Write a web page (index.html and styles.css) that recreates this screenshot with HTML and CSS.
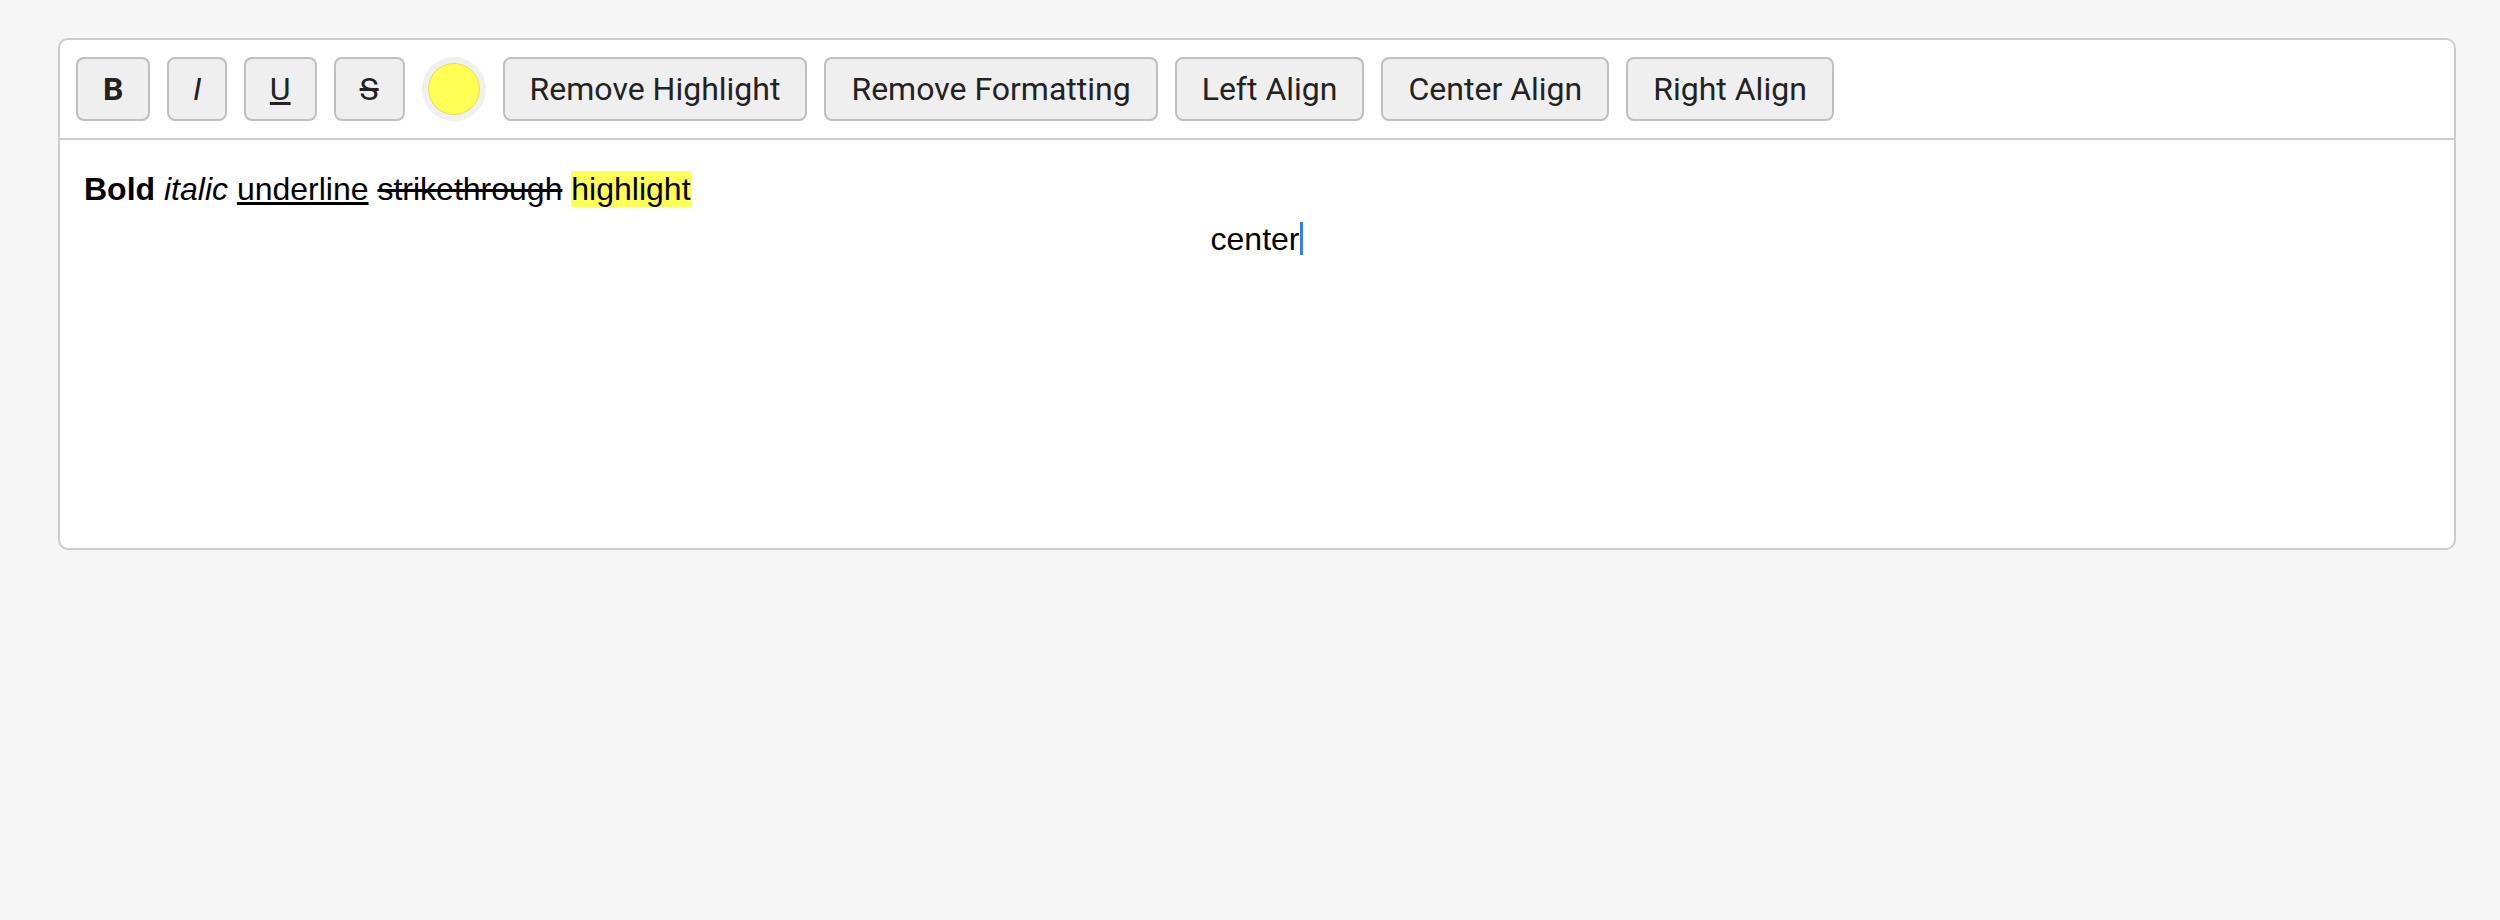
FILE: index.html
```html
<!DOCTYPE html>
<html lang="en">
<head>
<meta charset="utf-8">
<title>Editor</title>
<link rel="stylesheet" href="styles.css">
</head>
<body>
<div class="editor-box">
  <div class="toolbar">
    <button class="btn btn-b">B</button>
    <button class="btn btn-i">I</button>
    <button class="btn btn-u">U</button>
    <button class="btn btn-s">S</button>
    <span class="color-pick"><span class="swatch"></span></span>
    <button class="btn">Remove Highlight</button>
    <button class="btn">Remove Formatting</button>
    <button class="btn">Left Align</button>
    <button class="btn">Center Align</button>
    <button class="btn">Right Align</button>
  </div>
  <div class="editor">
    <div class="line"><b>Bold</b> <i>italic</i> <u>underline</u> <s>strikethrough</s> <span class="hl">highlight</span></div>
    <div class="line center">center<span class="caret"></span></div>
  </div>
</div>
</body>
</html>
```
FILE: styles.css
```css
html, body {
  margin: 0;
  background: #f6f6f6;
}
body {
  padding: 38px 44px 0 58px;
}
.editor-box {
  background: #fff;
  border: 2px solid #cccccc;
  border-radius: 10px;
}
.toolbar {
  display: flex;
  align-items: center;
  gap: 17px;
  padding: 17px 16px;
  border-bottom: 2px solid #cccccc;
}
.btn {
  font-family: Roboto, "Liberation Sans", Arial, sans-serif;
  font-size: 32px;
  line-height: 36px;
  height: 64px;
  padding: 12px 25px;
  border: 2px solid #bfbfbf;
  border-radius: 8px;
  background: #efefef;
  color: #222;
  margin: 0;
}
.btn-b { font-weight: bold; }
.btn-i { font-style: italic; padding: 12px 23.5px; }
.btn-u { text-decoration: underline; padding: 12px 24px; }
.btn-s { text-decoration: line-through; padding: 12px 24px; }
.color-pick {
  width: 64px;
  height: 64px;
  border-radius: 50%;
  background: #f0f0f0;
  display: flex;
  align-items: center;
  justify-content: center;
}
.swatch {
  width: 52px;
  height: 52px;
  border-radius: 50%;
  background: #ffff55;
  box-sizing: border-box;
  border: 1px solid #e3e34a;
}
.editor {
  box-sizing: border-box;
  height: 408px;
  padding: 24px;
  font-family: "Liberation Sans", Arial, sans-serif;
  font-size: 32px;
  line-height: 50px;
  color: #000;
}
.center { text-align: center; }
.hl { background: #ffff55; }
.caret {
  display: inline-block;
  width: 3px;
  height: 33px;
  background: #3b7cf0;
  vertical-align: -5px;
  margin-left: 1px;
}
```
